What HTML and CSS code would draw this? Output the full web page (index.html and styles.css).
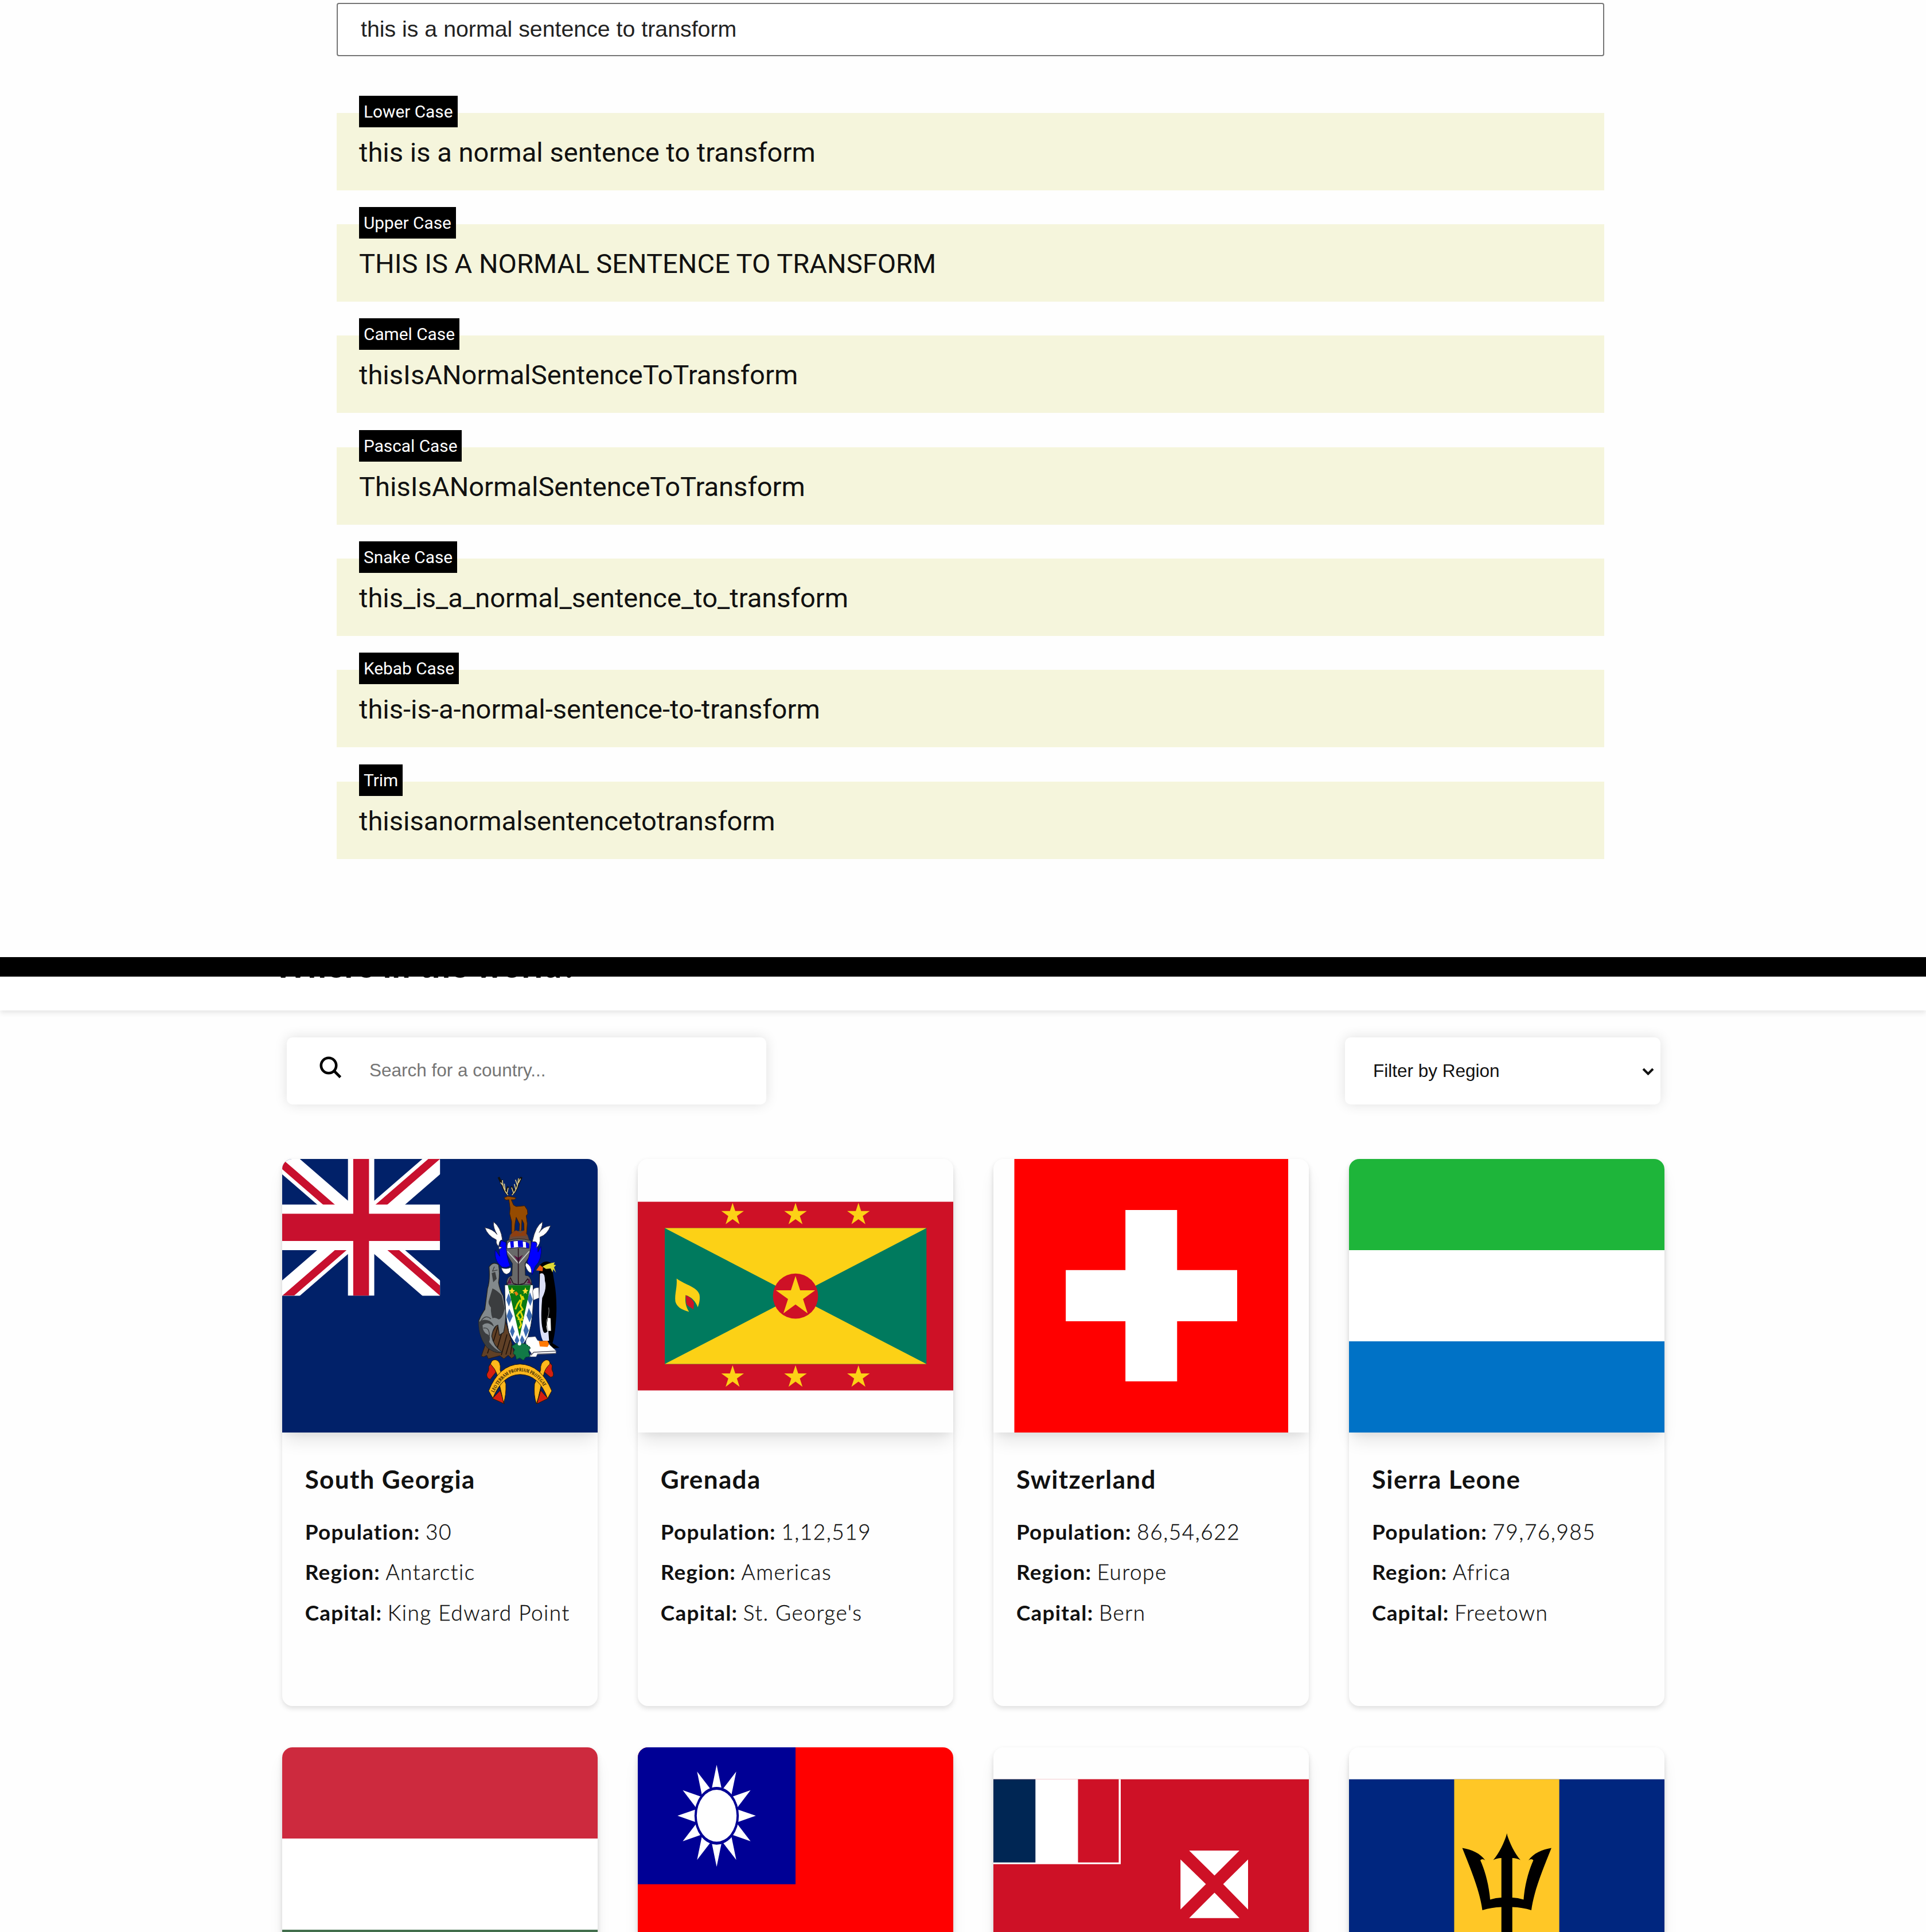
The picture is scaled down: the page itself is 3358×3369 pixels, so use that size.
FILE: index.html
```html
<!DOCTYPE html>
<html lang="en">
<head>
<meta charset="utf-8">
<title>Projects</title>
<link rel="stylesheet" href="styles.css">
</head>
<body>
<section class="transformer">
  <input class="sentence" type="text" value="this is a normal sentence to transform">
  <div class="results">
    <div class="result"><span class="badge">Lower Case</span><p>this is a normal sentence to transform</p></div>
    <div class="result"><span class="badge">Upper Case</span><p>THIS IS A NORMAL SENTENCE TO TRANSFORM</p></div>
    <div class="result"><span class="badge">Camel Case</span><p>thisIsANormalSentenceToTransform</p></div>
    <div class="result"><span class="badge">Pascal Case</span><p>ThisIsANormalSentenceToTransform</p></div>
    <div class="result"><span class="badge">Snake Case</span><p>this_is_a_normal_sentence_to_transform</p></div>
    <div class="result"><span class="badge">Kebab Case</span><p>this-is-a-normal-sentence-to-transform</p></div>
    <div class="result"><span class="badge">Trim</span><p>thisisanormalsentencetotransform</p></div>
  </div>
</section>
<div class="divider"></div>
<section class="countries">
  <header class="site-header"><h1>Where in the world?</h1></header>
  <div class="toolbar">
    <label class="search">
      <svg class="search-icon" viewBox="0 0 39 39"><circle cx="16" cy="16" r="13.2"/><path d="M25.5 25.5L36.5 36.5"/></svg>
      <span>Search for a country...</span>
    </label>
    <div class="filter"><span>Filter by Region</span>
      <svg class="chevron" viewBox="0 0 21 13"><path d="M2 2L10.5 10.5L19 2"/></svg>
    </div>
  </div>
  <main class="grid">
    <article class="card">
      <svg class="flag" viewBox="0 0 550 477" preserveAspectRatio="none">
        <defs>
          <clipPath id="canton"><path d="M0 0h60v30H0z"/></clipPath>
          <clipPath id="saltire"><path d="M30 15h30v15zv15H0zH0V0zV0h30z"/></clipPath>
        </defs>
        <rect width="550" height="477" fill="#012169"/>
        <g transform="scale(4.5867 7.95)" clip-path="url(#canton)">
          <path d="M0 0L60 30M60 0L0 30" stroke="#fff" stroke-width="6"/>
          <path d="M0 0L60 30M60 0L0 30" clip-path="url(#saltire)" stroke="#c8102e" stroke-width="4"/>
          <path d="M30 0V30M0 15H60" stroke="#fff" stroke-width="10"/>
          <path d="M30 0V30M0 15H60" stroke="#c8102e" stroke-width="6"/>
        </g>
        <g transform="translate(308 -1) scale(.33333)" stroke-linejoin="round">
          <!-- stag -->
          <g fill="none" stroke="#111" stroke-width="11"><path d="M257 190Q225 160 224 112M278 190Q312 160 314 104M236 158L208 98M246 176L258 148M296 162L328 98M288 176L274 146"/></g>
          <g fill="none" stroke="#d8c88c" stroke-width="5"><path d="M257 192Q228 160 228 114M278 192Q310 160 312 104M232 142L218 126M242 165L238 132M252 182L258 154M306 140L296 112M298 162L290 134M286 180L276 152M312 128L322 106"/></g>
          <path d="M236 206L256 198L280 202L300 206L290 216L274 216L286 244L300 252L344 248L358 270L360 290L352 300L358 340L354 396H342L340 340L330 320L326 396H314L318 344L300 308L294 340L290 396H276L276 330L266 290L268 260L262 216L246 218Z" fill="#964b00" stroke="#3a1a05" stroke-width="3"/>
          <path d="M268 400L290 380L340 378L360 402L372 440H258Z" fill="#6b4a3a" stroke="#333" stroke-width="2"/>
          <path d="M276 392L300 376L322 392L344 374L356 404L272 410Z" fill="#8f3f10"/>
          <!-- helmet and mantling -->
          <path d="M252 430Q312 412 376 430L384 490L346 550L348 612Q378 610 382 662H250Q248 618 278 614L280 550L244 490Z" fill="#696969" stroke="#222" stroke-width="3"/>
          <path d="M222 430Q206 480 214 512L190 478Q184 540 226 568Q250 575 268 560Q248 520 246 440ZM380 436Q374 500 358 540L384 608L400 564Q436 530 430 460L414 490L412 440Z" fill="#00f" stroke="#00007a" stroke-width="3"/>
          <path d="M222 572Q250 582 272 570Q276 598 250 606Q230 602 222 572ZM350 546Q382 560 380 598Q360 600 348 560Z" fill="#fff" stroke="#222" stroke-width="2"/>
          <path d="M252 472Q250 438 268 434L310 430L352 436Q370 444 368 470Q310 462 252 472Z" fill="#fff" stroke="#113" stroke-width="3"/>
          <path d="M268 436L286 432L288 466L272 468ZM308 430H334L336 464H310ZM350 437L368 446L366 470L352 467Z" fill="#0000e6"/>
          <path d="M254 486L312 550L368 486" fill="none" stroke="#ccc" stroke-width="5"/>
          <path d="M286 506L310 520L336 504L312 542Z" fill="#5b1240"/>
          <path d="M311 470V660M252 660L270 624L284 654L311 662L342 654L360 630L380 660" fill="none" stroke="#2a1420" stroke-width="5"/>
          <path d="M254 656L266 628L276 654ZM356 652L370 628L376 656Z" fill="#641a45"/>
          <path d="M226 466Q190 458 196 426Q150 404 136 362Q178 370 200 398Q178 362 182 332Q220 360 228 426Q206 426 210 476ZM384 436Q402 350 438 332Q436 368 420 388Q442 356 480 352Q462 400 424 412Q430 450 404 468Q420 430 384 436Z" fill="#fff" stroke="#334" stroke-width="3"/>
          <!-- seal on its rock -->
          <path d="M118 1034L140 970L205 860L240 840L270 940L292 1034L276 1046L258 1030L236 1048L214 1032L154 1048L146 1030L130 1038Z" fill="#604026" stroke="#2c1a10" stroke-width="3"/>
          <path d="M168 1000L204 880M196 1010L234 880M222 1030L252 920M246 1026L268 950M150 1020L166 970M270 1026L278 970" stroke="#22140c" stroke-width="5"/>
          <path d="M158 568Q178 536 208 556Q216 600 208 650Q214 690 232 718L246 800Q246 860 234 910L212 925L204 872Q180 880 172 930Q180 980 226 1014Q190 1022 150 990Q104 940 104 850Q116 818 136 790L150 680Q164 640 158 568Z" fill="#83898c" stroke="#222" stroke-width="4"/>
          <path d="M176 680Q200 690 224 716L240 786Q228 840 208 842Q190 830 176 836Q166 812 168 780Q150 760 158 740ZM104 856Q130 836 160 850Q182 864 182 880Q150 850 124 872Q124 910 150 920Q170 930 158 960Q188 1000 224 1014Q190 1020 150 990Q104 940 104 856ZM172 600L190 594L198 630L180 648Z" fill="#3b3d3f"/>
          <path d="M116 850Q140 814 168 840M128 888Q160 880 160 930M186 566L176 590L202 584" fill="none" stroke="#3b3d3f" stroke-width="4"/>
          <!-- plinth of tussock and ice -->
          <path d="M352 936L400 932L412 952L470 970L508 1006V1020L410 1026L404 1038H366L380 1020L350 980Z" fill="#fff" stroke="#556" stroke-width="2"/>
          <path d="M508 1008L392 1014L376 1030M410 1024L508 1020" fill="none" stroke="#556" stroke-width="5"/>
          <!-- shield -->
          <path d="M240 662H388Q396 830 362 930Q340 975 316 986Q282 965 262 910Q240 820 240 662Z" fill="#fff" stroke="#123" stroke-width="3"/>
          <path d="M260 706L274 740L262 775L248 740ZM264 786L282 825L266 860L250 825ZM280 872L292 905L280 935L268 905ZM304 924L316 952L304 980L292 952ZM372 700L386 738L374 772L358 735ZM366 782L384 822L370 858L354 822ZM350 864L366 900L350 936L338 900ZM330 924L344 950L330 978L320 950Z" fill="#3a6ab0"/>
          <path d="M256 664H376L318 934Z" fill="#0a7a12"/>
          <path d="M278 674L283 688L294 690L284 698L287 710L278 703L268 710L271 698L262 690L273 688ZM348 674L353 688L364 690L354 698L357 710L348 703L338 710L341 698L332 690L343 688Z" fill="#fd3"/>
          <path d="M322 712L330 735L322 770L334 790L322 800L334 830L320 850L326 870L316 890M322 740L306 764L296 790M320 800L304 822L316 836M332 720L340 740M308 840L336 845" fill="none" stroke="#d9d70b" stroke-width="9"/>
          <path d="M288 700L302 696L312 710L300 720Z" fill="#e67a12"/>
          <path d="M276 984L300 968L350 970L374 990L364 1010L372 1036L350 1040L338 1056L318 1044L302 1052L296 1030L284 1020L292 1000Z" fill="#117a46" stroke="#0a4028" stroke-width="4" stroke-dasharray="7 4"/>
          <circle cx="317" cy="970" r="9" fill="#fff"/>
          <!-- penguin -->
          <path d="M418 676Q390 674 386 694L390 742L420 730Z" fill="#fff" stroke="#334" stroke-width="2"/>
          <path d="M480 960L526 990L496 994L476 976Z"/>
          <path d="M424 558Q454 524 488 552Q490 600 500 650Q516 740 508 850Q502 930 490 966L446 962Q418 930 420 760L420 600Z"/>
          <path d="M424 604Q450 590 450 640Q462 680 436 730Q426 850 438 890Q444 930 468 900L472 954H440Q418 920 420 760Z" fill="#dde0f8"/>
          <path d="M466 834L480 836L482 902L462 902L458 880Z" fill="#fff"/>
          <path d="M470 780Q476 815 458 850L466 900" fill="none" stroke="#999" stroke-width="3"/>
          <path d="M404 586L424 558L440 570L438 590L420 588Z" fill="#ea5a10"/>
          <path d="M438 566Q462 550 502 544L496 556L508 558L498 570L508 598L494 580L490 596L480 576L456 578Z" fill="#e0d934"/>
          <path d="M418 956L464 954L472 972L464 986L424 984Z" fill="#ff7800"/>
          <!-- motto scroll -->
          <g stroke="#2b1a00" stroke-width="3">
            <path d="M168 1070L190 1074L194 1118L164 1156Q144 1150 146 1128Q160 1110 156 1090ZM478 1070L454 1074L448 1118L478 1144Q498 1146 494 1122Q482 1104 488 1084ZM176 1256L216 1214L238 1284ZM466 1256L428 1214L408 1284Z" fill="#d41f10"/>
            <path d="M166 1076Q172 1050 194 1054Q222 1062 216 1108L246 1180Q248 1240 234 1280L228 1250L200 1130Q190 1100 166 1076ZM476 1076Q478 1054 456 1054Q424 1066 428 1108L396 1180Q390 1240 406 1284L416 1250L444 1130Q450 1100 476 1076Z" fill="#ffb81c"/>
            <path d="M156 1216Q210 1080 320 1076Q430 1080 486 1216L464 1256Q420 1132 320 1130Q228 1132 178 1254Z" fill="#ffb81c"/>
          </g>
          <path id="motto" d="M184 1226Q234 1116 320 1114Q410 1116 460 1224" fill="none"/>
          <text class="motto"><textPath href="#motto" textLength="340" lengthAdjust="spacingAndGlyphs">LEO TERRAM PROPRIAM PROTEGAT</textPath></text>
        </g>
      </svg>
      <div class="details"><h2>South Georgia</h2><p><b>Population:</b> <i>30</i></p><p><b>Region:</b> <i>Antarctic</i></p><p><b>Capital:</b> <i>King Edward Point</i></p></div>
    </article>
    <article class="card">
      <svg class="flag" viewBox="0 0 550 477" preserveAspectRatio="none">
        <defs><path id="star" d="M0 -1L.2245 -.309H.951L.3633 .118L.5878 .809L0 .382L-.5878 .809L-.3633 .118L-.951 -.309H-.2245Z" fill="#fcd116"/></defs>
        <rect width="550" height="477" fill="#fefefe"/>
        <g transform="translate(0 74.6)">
          <rect width="550" height="329" fill="#ce1126"/>
          <rect x="47" y="46" width="456.3" height="237" fill="#007a5e"/>
          <path d="M47 46H503.3L47 283H503.3Z" fill="#fcd116"/>
          <circle cx="275" cy="164.5" r="39.4" fill="#ce1126"/>
          <use href="#star" transform="translate(275 165.5) scale(36)"/>
          <use href="#star" transform="translate(165.3 22.5) scale(20.7)"/>
          <use href="#star" transform="translate(275 22.5) scale(20.7)"/>
          <use href="#star" transform="translate(384.7 22.5) scale(20.7)"/>
          <use href="#star" transform="translate(165.3 305.8) scale(20.7)"/>
          <use href="#star" transform="translate(275 305.8) scale(20.7)"/>
          <use href="#star" transform="translate(384.7 305.8) scale(20.7)"/>
          <path d="M67.7 134C84 146 103 148 107.5 162C109 170 107 178 104.6 184C101 174 94 166 83.4 163C82 175 84 184 89.5 192C75 188 68 183 65.5 174C64 160 69 150 67.7 134Z" fill="#fcd116"/>
          <path d="M83.4 163C91 166 96 171 98 177L97 188C91 183 86 182 84.6 178Z" fill="#ce1126"/>
        </g>
      </svg>
      <div class="details"><h2>Grenada</h2><p><b>Population:</b> <i>1,12,519</i></p><p><b>Region:</b> <i>Americas</i></p><p><b>Capital:</b> <i>St. George's</i></p></div>
    </article>
    <article class="card">
      <svg class="flag" viewBox="0 0 550 477" preserveAspectRatio="none">
        <rect width="550" height="477" fill="#fefefe"/>
        <rect x="36.5" width="477.5" height="477" fill="#f00"/>
        <path d="M230.2 89H320.3V193.7H425V283H320.3V387.7H230.2V283H126.2V193.7H230.2Z" fill="#fff"/>
      </svg>
      <div class="details"><h2>Switzerland</h2><p><b>Population:</b> <i>86,54,622</i></p><p><b>Region:</b> <i>Europe</i></p><p><b>Capital:</b> <i>Bern</i></p></div>
    </article>
    <article class="card">
      <svg class="flag" viewBox="0 0 550 477" preserveAspectRatio="none">
        <rect width="550" height="477" fill="#fff"/><rect width="550" height="159" fill="#1eb53a"/><rect y="318" width="550" height="159" fill="#0072c6"/>
      </svg>
      <div class="details"><h2>Sierra Leone</h2><p><b>Population:</b> <i>79,76,985</i></p><p><b>Region:</b> <i>Africa</i></p><p><b>Capital:</b> <i>Freetown</i></p></div>
    </article>
    <article class="card">
      <svg class="flag" viewBox="0 0 550 477" preserveAspectRatio="none">
        <rect width="550" height="477" fill="#fff"/><rect width="550" height="159" fill="#cd2a3e"/><rect y="318" width="550" height="159" fill="#436f4d"/>
      </svg>
    </article>
    <article class="card">
      <svg class="flag" viewBox="0 0 550 477" preserveAspectRatio="none">
        <defs><path id="ray" d="M0 -60L8.04 -30H-8.04Z" fill="#fff"/></defs>
        <rect width="550" height="477" fill="#f00"/>
        <rect width="275" height="238.7" fill="#000095"/>
        <g transform="translate(137.5 119.3) scale(1.138 1.482)">
          <use href="#ray"/><use href="#ray" transform="rotate(30)"/><use href="#ray" transform="rotate(60)"/><use href="#ray" transform="rotate(90)"/><use href="#ray" transform="rotate(120)"/><use href="#ray" transform="rotate(150)"/><use href="#ray" transform="rotate(180)"/><use href="#ray" transform="rotate(210)"/><use href="#ray" transform="rotate(240)"/><use href="#ray" transform="rotate(270)"/><use href="#ray" transform="rotate(300)"/><use href="#ray" transform="rotate(330)"/>
          <circle r="34" fill="#000095"/><circle r="30.5" fill="#fff"/>
        </g>
      </svg>
    </article>
    <article class="card">
      <svg class="flag" viewBox="0 0 550 477" preserveAspectRatio="none">
        <rect width="550" height="477" fill="#fefefe"/>
        <rect y="55.7" width="550" height="366.6" fill="#ce1126"/>
        <rect y="55.7" width="222" height="148" fill="#fff"/>
        <rect y="55.7" width="73.3" height="145" fill="#002654"/>
        <rect x="147.5" y="55.7" width="71" height="145" fill="#ce1126"/>
        <path d="M341.3 180H429L385.5 223.4ZM341.3 297.7H429L385.5 253.4ZM326.2 195.4L370.5 238.6L326.2 282.7ZM444 195.4L400.6 238.6L444 282.7Z" fill="#fff"/>
      </svg>
    </article>
    <article class="card">
      <svg class="flag" viewBox="0 0 550 477" preserveAspectRatio="none">
        <defs><path id="half-trident" d="M275.5 150C270 168 262 184 251.5 196.5Q258 193 265.7 193V262Q256 262 246 265.5C244 238 236 212 229 197Q232 193 237.5 197C229 185 214 178 197.5 175.5C212 212 228 250 232.5 284Q248 279 265.7 278.5V422H275.5Z"/></defs>
        <rect width="550" height="477" fill="#fefefe"/>
        <rect y="55.7" width="550" height="366.6" fill="#00267f"/>
        <rect x="183.4" y="55.7" width="183.2" height="366.6" fill="#ffc726"/>
        <use href="#half-trident"/>
        <use href="#half-trident" transform="matrix(-1 0 0 1 550.4 0)"/>
      </svg>
    </article>
  </main>
</section>
</body>
</html>
```
FILE: styles.css
```css
* { box-sizing: border-box; }
body { margin: 0; width: 3358px; height: 3369px; overflow: hidden; background: #fefefe; color: #111; }
h1, h2, p { margin: 0; }

.transformer { height: 1669px; padding: 5px 561px 0 587px; background: #fefefe; font-family: Roboto, sans-serif; }
.sentence { display: block; width: 100%; height: 93px; padding: 0 40px 2px; border: 2px solid #767676; border-radius: 4px; background: #fff; color: #222; font: 39.3px "Liberation Sans", Arial, sans-serif; outline: 0; }
.results { display: flex; flex-direction: column; gap: 59.4px; margin-top: 98.5px; }
.result { position: relative; height: 135px; padding: 36px 39px 0; background: #f5f5dc; }
.result p { font-size: 47.1px; line-height: 66px; color: #111; white-space: nowrap; }
.badge { position: absolute; left: 39px; top: -30px; height: 55px; padding: 0 8px; background: #000; color: #fff; font-size: 29.8px; line-height: 55px; white-space: nowrap; }

.divider { height: 34px; background: #000; }

.countries { height: 1666px; overflow: hidden; background: #fefefe; }
.site-header { height: 59px; overflow: hidden; padding-left: 477px; background: #fff; box-shadow: 0 4px 9px rgba(0, 0, 0, .1); }
.site-header h1 { margin-top: -57px; font: 900 56px/76px Lato, sans-serif; letter-spacing: 1.1px; white-space: nowrap; color: #111; }
.toolbar { display: flex; justify-content: space-between; padding: 47px 463px 0 500px; }
.search, .filter { display: flex; align-items: center; height: 117px; background: #fff; border-radius: 10px; box-shadow: 0 0 22px rgba(0, 0, 0, .12); font: 31.5px "Liberation Sans", Arial, sans-serif; }
.search { width: 836px; padding: 0 0 3px 57px; gap: 48px; color: #757575; }
.search-icon { width: 39px; height: 39px; margin-bottom: 9px; fill: none; stroke: #000; stroke-width: 4.6; }
.filter { width: 550px; padding: 0 11px 0 49px; justify-content: space-between; color: #111; }
.chevron { width: 21px; height: 13px; margin-top: 2px; fill: none; stroke: #111; stroke-width: 4; }

.grid { display: grid; grid-template-columns: repeat(4, 550px); gap: 72.3px 70.1px; margin: 95px 0 0 492.2px; }
.card { height: 954px; border-radius: 18px; background: #fefefe; box-shadow: 0 4px 10px rgba(0, 0, 0, .13); }
.flag { display: block; width: 550px; height: 477px; border-radius: 18px 18px 0 0; box-shadow: 0 20px 30px -6px rgba(0, 0, 0, .1), 0 8px 12px -4px rgba(0, 0, 0, .05); }
.motto { font: bold 27px "Liberation Serif", serif; fill: #1b1200; }
.details { padding: 51px 39.5px 0; font-family: Lato, sans-serif; }
.details h2 { margin-bottom: 27px; font-size: 44px; line-height: 60px; font-weight: 700; letter-spacing: 1.35px; }
.details p { font-size: 37px; line-height: 70.4px; white-space: nowrap; color: #111; }
.details b { font-weight: 700; letter-spacing: 1.2px; }
.details i { font-style: normal; font-weight: 300; letter-spacing: 1.5px; -webkit-text-stroke: .4px #111; }
```
